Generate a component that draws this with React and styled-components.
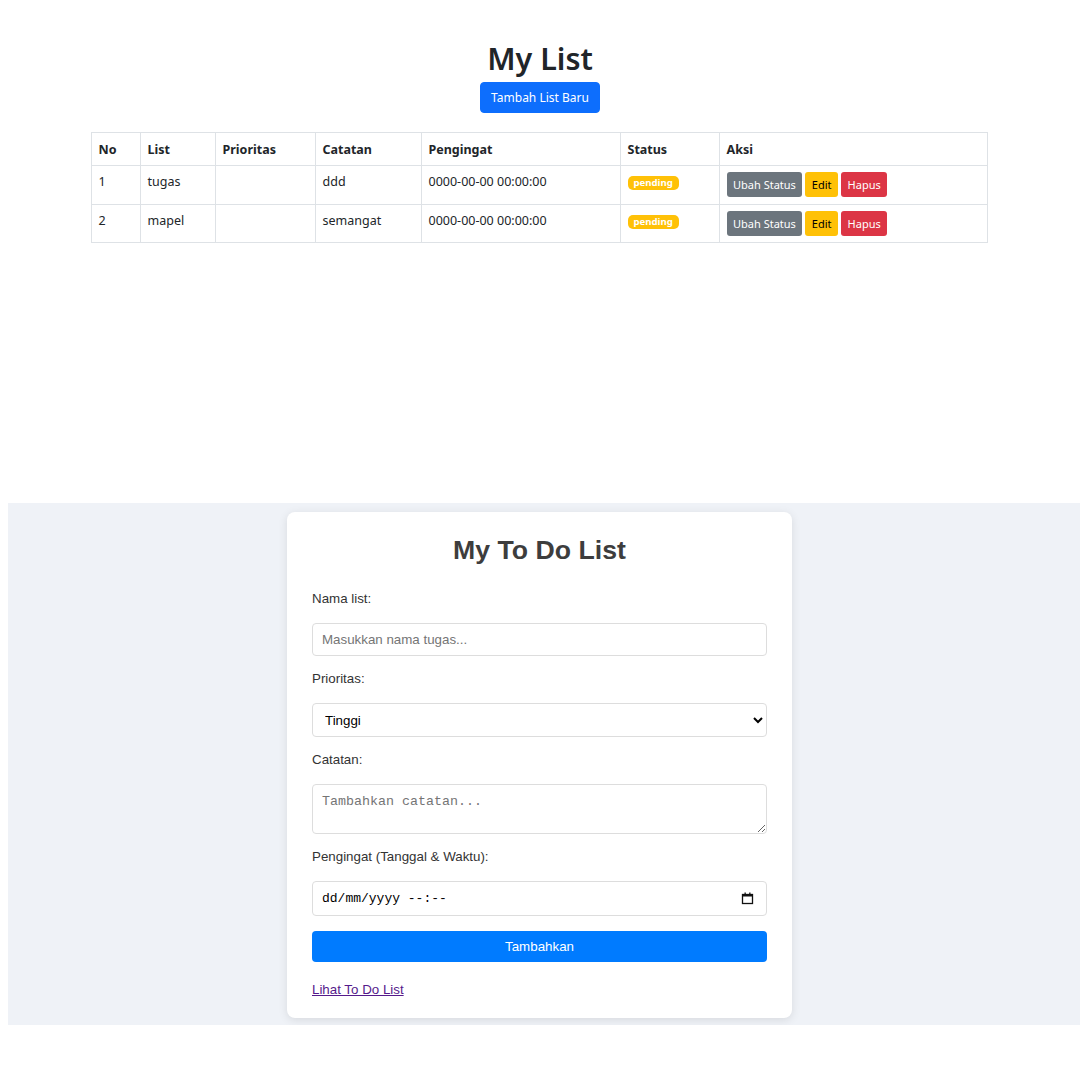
import React from "react";
import styled, { createGlobalStyle } from "styled-components";

const rows = [
  { no: 1, list: "tugas", prioritas: "", catatan: "ddd", pengingat: "0000-00-00 00:00:00", status: "pending" },
  { no: 2, list: "mapel", prioritas: "", catatan: "semangat", pengingat: "0000-00-00 00:00:00", status: "pending" },
];

const columns = [
  { label: "No", width: 49 },
  { label: "List", width: 75 },
  { label: "Prioritas", width: 100 },
  { label: "Catatan", width: 106 },
  { label: "Pengingat", width: 199 },
  { label: "Status", width: 99 },
  { label: "Aksi", width: 268 },
];

const CalendarIcon = () => (
  <svg width="13" height="13" viewBox="0 0 13 13" fill="none">
    <rect x="1.5" y="2.5" width="10" height="9" stroke="#111" strokeWidth="1.3" />
    <rect x="1.5" y="2.5" width="10" height="2" fill="#111" />
    <rect x="3.5" y="0.5" width="1.3" height="2.5" fill="#111" />
    <rect x="8.2" y="0.5" width="1.3" height="2.5" fill="#111" />
  </svg>
);

export default function App() {
  return (
    <>
      <GlobalStyle />
      <ListPage>
        <Title>My List</Title>
        <PrimaryButton>Tambah List Baru</PrimaryButton>
        <Table>
          <colgroup>
            {columns.map((c) => (
              <col key={c.label} style={{ width: c.width }} />
            ))}
          </colgroup>
          <thead>
            <tr>
              {columns.map((c) => (
                <th key={c.label}>{c.label}</th>
              ))}
            </tr>
          </thead>
          <tbody>
            {rows.map((r) => (
              <tr key={r.no}>
                <td>{r.no}</td>
                <td>{r.list}</td>
                <td>{r.prioritas}</td>
                <td>{r.catatan}</td>
                <td>{r.pengingat}</td>
                <td>
                  <Badge>{r.status}</Badge>
                </td>
                <td>
                  <Actions>
                    <SmallButton $variant="secondary">Ubah Status</SmallButton>
                    <SmallButton $variant="warning">Edit</SmallButton>
                    <SmallButton $variant="danger">Hapus</SmallButton>
                  </Actions>
                </td>
              </tr>
            ))}
          </tbody>
        </Table>
      </ListPage>

      <FormSection>
        <Card>
          <CardTitle>My To Do List</CardTitle>
          <Field>
            <Label>Nama list:</Label>
            <TextInput placeholder="Masukkan nama tugas..." />
          </Field>
          <Field>
            <Label>Prioritas:</Label>
            <Select defaultValue="Tinggi">
              <option>Tinggi</option>
              <option>Sedang</option>
              <option>Rendah</option>
            </Select>
          </Field>
          <Field>
            <Label>Catatan:</Label>
            <TextArea placeholder="Tambahkan catatan..." />
          </Field>
          <Field>
            <Label>Pengingat (Tanggal &amp; Waktu):</Label>
            <DateBox>
              <span>dd/mm/yyyy --:--</span>
              <CalendarIcon />
            </DateBox>
          </Field>
          <SubmitButton>Tambahkan</SubmitButton>
          <LinkRow>
            <a href="#list">Lihat To Do List</a>
          </LinkRow>
        </Card>
      </FormSection>
    </>
  );
}

const GlobalStyle = createGlobalStyle`
  body {
    margin: 0;
    background: #fff;
    font-family: "Noto Sans", "Segoe UI", sans-serif;
    color: #212529;
  }
  * { box-sizing: border-box; }
`;

const ListPage = styled.div`
  height: 503px;
  padding-top: 36px;
  display: flex;
  flex-direction: column;
  align-items: center;
`;

const Title = styled.h1`
  margin: 0 0 2px;
  font-size: 30.5px;
  font-weight: 600;
  line-height: 44px;
  color: #212529;
`;

const PrimaryButton = styled.button`
  font-family: inherit;
  font-size: 12px;
  color: #fff;
  background: #0d6efd;
  border: 1px solid #0d6efd;
  border-radius: 4px;
  height: 31px;
  padding: 0 10px;
  margin-bottom: 19px;
`;

const Table = styled.table`
  width: 896px;
  margin-right: 2px;
  table-layout: fixed;
  border-collapse: collapse;
  font-size: 12.5px;
  color: #212529;

  th,
  td {
    border: 1px solid #dee2e6;
    padding: 6.3px 7px;
    text-align: left;
    vertical-align: top;
    line-height: 19px;
  }
  th {
    font-weight: 700;
    padding: 6.5px 7px;
  }
`;

const Badge = styled.span`
  display: inline-block;
  margin-top: 2px;
  padding: 1px 6px 2px;
  font-size: 9.6px;
  font-weight: 700;
  line-height: 11px;
  color: #fff;
  background: #ffc107;
  border-radius: 5px;
`;

const Actions = styled.div`
  display: flex;
  gap: 3px;
`;

const variants = {
  secondary: { bg: "#6c757d", fg: "#fff" },
  warning: { bg: "#ffc107", fg: "#000" },
  danger: { bg: "#dc3545", fg: "#fff" },
};

const SmallButton = styled.button`
  font-family: inherit;
  font-size: 11px;
  height: 25px;
  padding: 0 6.5px;
  border: none;
  border-radius: 3px;
  background: ${(p) => variants[p.$variant].bg};
  color: ${(p) => variants[p.$variant].fg};
`;

const FormSection = styled.section`
  margin-left: 8px;
  background: #eff2f7;
  padding: 9px 9px 7px 0;
  display: flex;
  justify-content: center;
  font-family: "Liberation Sans", Arial, sans-serif;
  font-size: 13.33px;
`;

const Card = styled.div`
  width: 505px;
  background: #fff;
  border-radius: 8px;
  box-shadow: 0 2px 10px rgba(0, 0, 0, 0.1);
  padding: 24px 25px 20px;
`;

const CardTitle = styled.h2`
  margin: 0 0 27px;
  text-align: center;
  font-size: 26.67px;
  line-height: 28px;
  font-weight: 700;
  color: #3d3d3d;
`;

const Field = styled.div`
  margin-bottom: 15px;
`;

const Label = styled.label`
  display: block;
  color: #333;
  line-height: 16px;
  margin-bottom: 16px;
`;

const inputBase = `
  display: block;
  width: 100%;
  border: 1px solid #ddd;
  border-radius: 4px;
  background: #fff;
`;

const TextInput = styled.input`
  ${inputBase}
  height: 33px;
  padding: 0 9px;
  font-family: "Liberation Sans", Arial, sans-serif;
  font-size: 13.33px;
  &::placeholder { color: #757575; }
`;

const Select = styled.select`
  ${inputBase}
  height: 34px;
  padding: 0 8px;
  font-family: "Liberation Sans", Arial, sans-serif;
  font-size: 13.33px;
  color: #000;
`;

const TextArea = styled.textarea`
  ${inputBase}
  height: 50px;
  padding: 9px;
  font-family: "Liberation Mono", monospace;
  font-size: 13.33px;
  resize: vertical;
  &::placeholder { color: #757575; }
`;

const DateBox = styled.div`
  ${inputBase}
  height: 35px;
  padding: 0 12px 0 9px;
  display: flex;
  align-items: center;
  justify-content: space-between;
  font-family: "Liberation Mono", monospace;
  font-size: 13px;
  color: #000;
`;

const SubmitButton = styled.button`
  display: block;
  width: 100%;
  height: 31px;
  border: none;
  border-radius: 4px;
  background: #007bff;
  color: #fff;
  font-family: "Liberation Sans", Arial, sans-serif;
  font-size: 13.33px;
`;

const LinkRow = styled.div`
  margin-top: 20px;
  line-height: 16px;

  a {
    color: #551a8b;
  }
`;
